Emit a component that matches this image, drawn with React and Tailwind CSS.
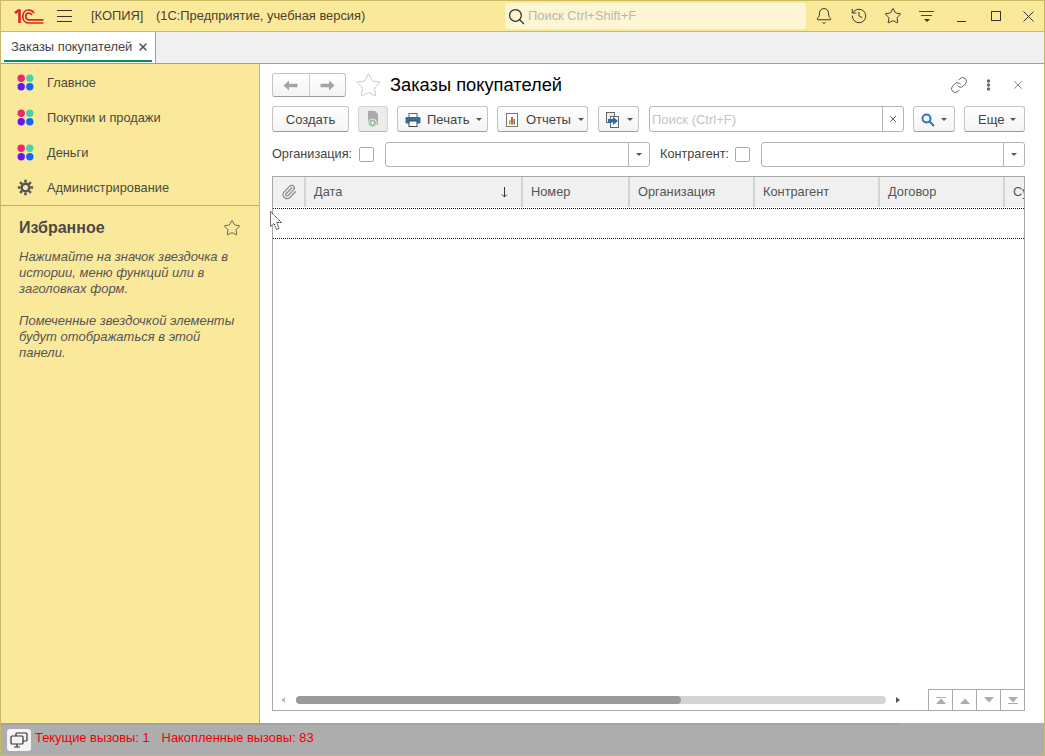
import { Bell, History, Star, X, Link, Paperclip } from 'lucide-react';

const Caret = ({ className = 'border-t-[#555]' }) => (
    <span className={`inline-block w-0 h-0 shrink-0 border-x-[3px] border-x-transparent border-t-[3px] ${className}`} />
);

const Button = ({ className = '', children }) => (
    <div className={`h-[26px] flex items-center pt-[1px] rounded-[3px] border border-[#c4c4c4] border-b-[#9a9a9a] bg-gradient-to-b from-white to-[#f4f4f4] text-[#444] shrink-0 ${className}`}>
        {children}
    </div>
);

const Dots = () => (
    <svg width="17" height="17" viewBox="0 0 17 17">
        <circle cx="4.2" cy="4.2" r="3.7" fill="#f0256e" />
        <circle cx="12.8" cy="4.2" r="3.7" fill="#46d2a8" />
        <circle cx="4.2" cy="12.8" r="3.7" fill="#6a12f0" />
        <circle cx="12.8" cy="12.8" r="3.7" fill="#1268f5" />
    </svg>
);

const Gear = () => (
    <svg width="17" height="17" viewBox="0 0 16 16" fill="none" stroke="#555">
        <circle cx="8" cy="8" r="3.6" strokeWidth="2.4" />
        <path d="M8 0.8 V3.4 M8 12.6 V15.2 M0.8 8 H3.4 M12.6 8 H15.2 M2.9 2.9 L4.8 4.8 M11.2 11.2 L13.1 13.1 M13.1 2.9 L11.2 4.8 M4.8 11.2 L2.9 13.1" strokeWidth="2.4" />
    </svg>
);

const Logo = () => (
    <svg width="30" height="15" viewBox="0 0 30 15" fill="none" stroke="#d9251c">
        <path d="M1 4 L4.5 1.5 H5.5 V14" strokeWidth="2.6" />
        <path d="M20 4 C19 2 17 1 14.5 1 C11 1 8.8 4 8.8 7.5 C8.8 11 11 14 14.5 14 H29.5" strokeWidth="1.7" />
        <path d="M18 6 C17.3 4.9 16 4.2 14.7 4.2 C12.7 4.2 11.7 5.7 11.7 7.5 C11.7 9.3 12.7 10.8 14.7 10.8 H29.5" strokeWidth="1.7" />
    </svg>
);

const Printer = () => (
    <svg width="16" height="14" viewBox="0 0 16 14">
        <rect x="4" y="0.5" width="8" height="4" fill="#fff" stroke="#2f6f9f" />
        <rect x="0.5" y="4" width="15" height="6.5" rx="1" fill="#2f6f9f" />
        <rect x="4" y="8" width="8" height="5.5" fill="#fff" stroke="#444" />
    </svg>
);

const Report = () => (
    <svg width="14" height="14" viewBox="0 0 14 14">
        <rect x="1.5" y="0.5" width="11" height="13" fill="#fff" stroke="#777" />
        <rect x="4" y="7" width="1.6" height="4.5" fill="#d9a21c" />
        <rect x="6.2" y="4" width="1.6" height="7.5" fill="#c8352c" />
        <rect x="8.4" y="6" width="1.6" height="5.5" fill="#3f9f4a" />
    </svg>
);

const ExportDoc = () => (
    <svg width="16" height="16" viewBox="0 0 16 16">
        <rect x="1.5" y="0.5" width="8" height="10" fill="#e8eef5" stroke="#666" />
        <rect x="5.5" y="4.5" width="8" height="11" fill="#fff" stroke="#666" />
        <path d="M3 7 H8 V4.5 L13 9 L8 13 V10.5 H3 Z" fill="#1f6fb5" />
    </svg>
);

const NewDoc = () => (
    <svg width="16" height="18" viewBox="0 0 16 18">
        <path d="M3 1 H10 L13 4 V15 H3 Z" fill="#a9a9a9" />
        <circle cx="7.5" cy="13" r="4" fill="#8fbf96" stroke="#ececec" />
        <path d="M7.5 11 V15 M5.5 13 H9.5" stroke="#fff" />
    </svg>
);

const NavArrow = ({ flip }) => (
    <svg className={flip ? 'rotate-180' : ''} width="15" height="11" viewBox="0 0 15 11" fill="#a4a4a4">
        <path d="M0.5 5.5 L6 0.5 V3.8 H14.5 V7.2 H6 V10.5 Z" />
    </svg>
);

const Cursor = () => (
    <svg className="absolute left-[269px] top-[210px]" width="13" height="20" viewBox="0 0 13 20">
        <path d="M0.5 0.5 V15.5 L4 12.5 L6.5 18.5 L9 17.5 L6.8 11.5 H11.5 Z" fill="#fff" stroke="#111" strokeDasharray="1.2 0.8" />
    </svg>
);

const Screens = () => (
    <svg width="18" height="16" viewBox="0 0 18 16" fill="none" stroke="#333" strokeWidth="1.2">
        <rect x="6" y="1" width="11" height="8" rx="1" />
        <rect x="1" y="4" width="12" height="8" rx="1" fill="#f4f4f4" />
        <path d="M7 12 V15 M4 15 H10" />
    </svg>
);

const TriUp = ({ bar }) => (
    <svg width="10" height="7" viewBox="0 0 10 7" fill="#adadad">
        {bar && <rect x="0" y="0" width="10" height="1" />}
        <path d="M5 1.5 L10 7 H0 Z" />
    </svg>
);

const TriDown = ({ bar }) => (
    <svg width="10" height="7" viewBox="0 0 10 7" fill="#adadad">
        <path d="M0 0 H10 L5 5.5 Z" />
        {bar && <rect x="0" y="6" width="10" height="1" />}
    </svg>
);

const menu = ['Главное', 'Покупки и продажи', 'Деньги', 'Администрирование'];

const columns = [
    { title: 'Дата', w: 'w-[217px]', sort: true },
    { title: 'Номер', w: 'w-[107px]' },
    { title: 'Организация', w: 'w-[125px]' },
    { title: 'Контрагент', w: 'w-[125px]' },
    { title: 'Договор', w: 'w-[125px]' },
    { title: 'Сумма', w: 'w-[60px]' },
];

export default function App() {
    return (
        <div className="relative w-[1045px] h-[756px] overflow-hidden flex flex-col border border-[#c8b964] bg-white text-[13px] text-[#444] font-['Liberation_Sans',Arial,sans-serif]">
            {/* window title */}
            <header className="h-[31px] shrink-0 flex items-center bg-[#fbe99b] border-b border-[#c8b964] text-[#4a4030] text-[12.9px]">
                <div className="ml-[13px] w-[30px] flex"><Logo /></div>
                <div className="ml-[13px] w-[15px] flex flex-col gap-[4.5px]">
                    <span className="h-px bg-[#333]" />
                    <span className="h-px bg-[#333]" />
                    <span className="h-px bg-[#333]" />
                </div>
                <span className="ml-[19px] w-[53px] whitespace-nowrap">[КОПИЯ]</span>
                <span className="ml-[12px] w-[209px] whitespace-nowrap">(1С:Предприятие, учебная версия)</span>
                <div className="ml-[140px] w-[301px] h-[26px] flex items-center rounded-[2px] bg-[#fdf6d4] pl-[3px] gap-[3px]">
                    <svg width="17" height="17" viewBox="0 0 16 16" fill="none" stroke="#333" strokeWidth="1.2">
                        <circle cx="7" cy="7" r="5.5" />
                        <path d="M11 11 L15 15" />
                    </svg>
                    <span className="text-[#b8b8b0]">Поиск Ctrl+Shift+F</span>
                </div>
                <div className="ml-[9px] flex items-center text-[#333]">
                    <Bell size={18} strokeWidth={1.3} />
                    <History size={18} strokeWidth={1.3} className="ml-[17px]" />
                    <Star size={18} strokeWidth={1.3} className="ml-[16px]" />
                    <div className="ml-[17px] w-[15px] flex flex-col items-center gap-[3px]">
                        <span className="w-full h-px bg-[#444]" />
                        <span className="w-[11px] h-px bg-[#444]" />
                        <Caret className="border-t-[#333]" />
                    </div>
                    <span className="ml-[23px] mt-[10px] w-[9px] h-px bg-[#333]" />
                    <span className="ml-[25px] w-[10px] h-[10px] border border-[#333]" />
                    <svg className="ml-[22px]" width="11" height="11" viewBox="0 0 11 11" stroke="#333" strokeWidth="1">
                        <path d="M0.5 0.5 L10.5 10.5 M10.5 0.5 L0.5 10.5" />
                    </svg>
                </div>
            </header>

            {/* open tabs */}
            <div className="h-[32px] shrink-0 flex bg-[#f0f0f0] border-b border-[#a0a0a0]">
                <div className="w-[155px] bg-white border-r border-[#a0a0a0] flex flex-col px-[3px]">
                    <div className="flex-1 flex items-center justify-between pl-[7px] pr-[3px] pt-[1px]">
                        <span className="whitespace-nowrap text-[12.9px] text-[#444]">Заказы покупателей</span>
                        <X size={12} strokeWidth={3.2} className="text-[#555]" />
                    </div>
                    <span className="h-[2px] mb-[1px] bg-[#00904a]" />
                </div>
            </div>

            <div className="flex-1 min-h-0 flex">
                {/* section panel */}
                <aside className="w-[259px] shrink-0 bg-[#fbe99b] border-r border-[#c8b964] flex flex-col">
                    <nav className="pt-[1px] h-[142px] border-b border-[#bfae62]">
                        {menu.map((item, i) => (
                            <div key={item} className="h-[35px] flex items-center pl-[16px] gap-[13px] text-[12.8px] text-[#4a4a40]">
                                {i < 3 ? <Dots /> : <Gear />}
                                {item}
                            </div>
                        ))}
                    </nav>
                    <div className="px-[18px] pt-[13px]">
                        <div className="flex items-center justify-between h-[18px]">
                            <span className="text-[16px] font-bold text-[#4a4a4a]">Избранное</span>
                            <Star size={18} strokeWidth={1.2} className="text-[#555]" />
                        </div>
                        <p className="mt-[12px] italic leading-[16px] text-[#555] whitespace-nowrap">
                            Нажимайте на значок звездочка в<br />истории, меню функций или в<br />заголовках форм.
                        </p>
                        <p className="mt-[16px] italic leading-[16px] text-[#555] whitespace-nowrap">
                            Помеченные звездочкой элементы<br />будут отображаться в этой<br />панели.
                        </p>
                    </div>
                </aside>

                {/* form */}
                <main className="flex-1 min-w-0 flex flex-col pl-[12px] pr-[19px] pt-[8px] pb-[12px]">
                    <div className="h-[26px] shrink-0 flex items-center">
                        <div className="w-[74px] h-[24px] flex rounded-[3px] border border-[#c4c4c4] border-b-[#9a9a9a] bg-gradient-to-b from-white to-[#f4f4f4]">
                            <div className="flex-1 flex items-center justify-center border-r border-[#d0d0d0]"><NavArrow /></div>
                            <div className="flex-1 flex items-center justify-center"><NavArrow flip /></div>
                        </div>
                        <Star size={27} strokeWidth={0.7} className="ml-[9px] text-[#bbb]" />
                        <span className="ml-[8px] text-[18.3px] text-black whitespace-nowrap">Заказы покупателей</span>
                        <Link size={18} strokeWidth={1.2} className="ml-auto text-[#555]" />
                        <svg className="ml-[18px]" width="5" height="12" viewBox="0 0 5 12" fill="#666">
                            <circle cx="2.5" cy="2" r="1.7" />
                            <circle cx="2.5" cy="6" r="1.7" />
                            <circle cx="2.5" cy="10" r="1.7" />
                        </svg>
                        <X size={14} strokeWidth={1.2} className="ml-[20px] text-[#555]" />
                    </div>

                    <div className="mt-[8px] h-[26px] shrink-0 flex items-center">
                        <Button className="w-[77px] justify-center">Создать</Button>
                        <div className="ml-[9px] w-[30px] h-[26px] shrink-0 flex items-center justify-center rounded-[3px] border border-[#d4d4d4] border-b-[#b4b4b4] bg-[#ececec]"><NewDoc /></div>
                        <Button className="ml-[9px] w-[91px] pl-[7px] gap-[6px]"><Printer /><span>Печать</span><Caret /></Button>
                        <Button className="ml-[9px] w-[91px] pl-[7px] gap-[7px]"><Report /><span>Отчеты</span><Caret /></Button>
                        <Button className="ml-[10px] w-[41px] pl-[6px] gap-[6px]"><ExportDoc /><Caret /></Button>
                        <div className="ml-[10px] w-[256px] h-[26px] flex rounded-[3px] border border-[#b4b4b4]">
                            <span className="flex-1 pl-[2px] leading-[25px] text-[#c4c4c4]">Поиск (Ctrl+F)</span>
                            <div className="w-[21px] border-l border-[#b4b4b4] flex items-center justify-center"><X size={10} strokeWidth={2} /></div>
                        </div>
                        <Button className="ml-[9px] w-[42px] pl-[7px] gap-[6px]">
                            <svg width="14" height="14" viewBox="0 0 14 14" fill="none" stroke="#2b78b8" strokeWidth="2">
                                <circle cx="5.5" cy="5.5" r="4" />
                                <path d="M8.5 8.5 L13 13" />
                            </svg>
                            <Caret />
                        </Button>
                        <Button className="ml-[9px] w-[61px] pl-[13px] gap-[6px]"><span>Еще</span><Caret /></Button>
                    </div>

                    <div className="mt-[10px] h-[25px] shrink-0 flex items-center">
                        <span className="w-[80px] text-[12.7px] whitespace-nowrap">Организация:</span>
                        <span className="ml-[7px] w-[15px] h-[15px] rounded-[2px] border border-[#a8a8a8]" />
                        <div className="ml-[11px] w-[265px] h-[25px] flex rounded-[3px] border border-[#b4b4b4]">
                            <span className="flex-1" />
                            <div className="w-[21px] border-l border-[#b4b4b4] flex items-center justify-center"><Caret /></div>
                        </div>
                        <span className="ml-[10px] w-[68px] text-[12.7px] whitespace-nowrap">Контрагент:</span>
                        <span className="ml-[7px] w-[15px] h-[15px] rounded-[2px] border border-[#a8a8a8]" />
                        <div className="ml-[11px] w-[264px] h-[25px] flex rounded-[3px] border border-[#b4b4b4]">
                            <span className="flex-1" />
                            <div className="w-[21px] border-l border-[#b4b4b4] flex items-center justify-center"><Caret /></div>
                        </div>
                    </div>

                    <div className="mt-[9px] flex-1 min-h-0 flex flex-col border border-[#a8a8a8] overflow-hidden">
                        <div className="h-[30px] shrink-0 flex bg-[#f0f0f0] text-[12.8px]">
                            <div className="w-[33px] shrink-0 flex items-center justify-center border-r-2 border-[#d4d4d4] text-[#888]">
                                <Paperclip size={16} strokeWidth={1.8} />
                            </div>
                            {columns.map(col => (
                                <div key={col.title} className={`${col.w} shrink-0 flex items-center justify-between pl-[8px] pr-[13px] border-r-2 border-[#d4d4d4] text-[#555] whitespace-nowrap`}>
                                    {col.title}
                                    {col.sort && (
                                        <svg width="7" height="11" viewBox="0 0 7 11" fill="none" stroke="#333">
                                            <path d="M3.5 0 V10 M1 7.5 L3.5 10 L6 7.5" />
                                        </svg>
                                    )}
                                </div>
                            ))}
                        </div>
                        <div className="mt-[1px] h-[31px] shrink-0 border-y border-dotted border-[#111]" />
                        <div className="flex-1" />
                        <div className="h-[21px] shrink-0 flex items-center">
                            <span className="ml-[8px] w-0 h-0 border-y-[3px] border-y-transparent border-r-[4px] border-r-[#c0c0c0]" />
                            <div className="ml-[11px] w-[590px] h-[8px] rounded-full bg-[#d4d4d4]">
                                <div className="w-[385px] h-full rounded-full bg-[#9a9a9a]" />
                            </div>
                            <span className="ml-[10px] w-0 h-0 border-y-[3px] border-y-transparent border-l-[4px] border-l-[#555]" />
                            <div className="ml-auto flex h-full border-l border-t border-[#a8a8a8]">
                                <div className="w-[24px] flex items-center justify-center border-r border-[#a8a8a8]"><TriUp bar /></div>
                                <div className="w-[24px] flex items-center justify-center border-r border-[#a8a8a8]"><TriUp /></div>
                                <div className="w-[24px] flex items-center justify-center border-r border-[#a8a8a8]"><TriDown /></div>
                                <div className="w-[23px] flex items-center justify-center"><TriDown bar /></div>
                            </div>
                        </div>
                    </div>
                </main>
            </div>

            {/* status bar */}
            <footer className="h-[32px] shrink-0 flex flex-col bg-[#adadad] text-[#f00000] text-[12.9px]">
                <span className="h-[2px] w-[899px] shrink-0 bg-[#a2a2a2]" />
                <div className="flex-1 flex items-center">
                    <div className="ml-[6px] w-[24px] h-[22px] rounded-[3px] bg-[#f4f4f4] flex items-center justify-center"><Screens /></div>
                    <span className="ml-[4px] mb-[5px]">Текущие вызовы: 1</span>
                    <span className="ml-[12px] mb-[5px]">Накопленные вызовы: 83</span>
                </div>
            </footer>

            <Cursor />
        </div>
    );
}
